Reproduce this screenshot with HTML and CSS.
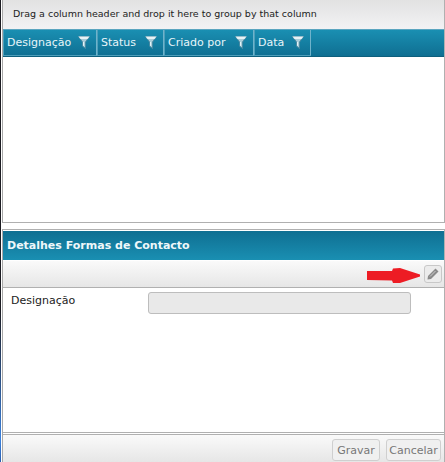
FILE: index.html
```html
<!doctype html>
<html lang="en">
<head>
    <meta charset="utf-8">
    <title>Detalhes Formas de Contacto</title>
    <link rel="stylesheet" href="styles.css">
</head>
<body>
    <svg class="defs" width="0" height="0">
        <symbol id="funnel" viewBox="0 0 12 13">
            <path d="M0.500 0.500H11.500L7.500 6V12.500L4.500 10V6Z" fill="#a9cdd9" stroke="#4a8aa2"/>
            <path d="M0.500 0.500H11.500L9.500 3H2.500Z" fill="#e6f2f6"/>
            <path d="M5 6H6V10L5 9.500Z" fill="#e6f2f6"/>
        </symbol>
    </svg>
    <div class="page">
        <div class="grid-panel">
            <div class="group-bar">Drag a column header and drop it here to group by that column</div>
            <div class="grid-head">
                <div class="col col-1">Designação <svg class="filter"><use href="#funnel"/></svg></div>
                <div class="col col-2">Status <svg class="filter"><use href="#funnel"/></svg></div>
                <div class="col col-3">Criado por <svg class="filter"><use href="#funnel"/></svg></div>
                <div class="col col-4">Data <svg class="filter"><use href="#funnel"/></svg></div>
            </div>
            <div class="grid-body"></div>
        </div>

        <div class="details-panel">
            <div class="details-title">Detalhes Formas de Contacto</div>
            <div class="toolbar">
                <svg class="arrow" viewBox="0 0 53 15"><path d="M0 3L25 3L26 0.500L33 0L53 6.500L53 8.500L33 15L26 15L25 12.500L0 12Z" fill="#ed1c24"/></svg>
                <button class="edit-btn" type="button">
                    <svg viewBox="0 0 12 12" width="12" height="12"><path d="M8.500 0.500L11.500 3.500L4 11L0.500 11.500L1 8Z" fill="#8a8a8a"/><path d="M3 8.500L8.500 3" stroke="#dcdcdc" stroke-width="0.800"/></svg>
                </button>
            </div>
            <div class="form">
                <label class="form-label">Designação</label>
                <div class="form-input"></div>
            </div>
            <div class="footer">
                <button class="btn btn-save" type="button">Gravar</button>
                <button class="btn btn-cancel" type="button">Cancelar</button>
            </div>
        </div>
    </div>
</body>
</html>
```

FILE: styles.css
```css
* {
    box-sizing: border-box;
    font-family: "DejaVu Sans", Verdana, sans-serif;
}
html, body {
    margin: 0;
    padding: 0;
    background: white;
}
.defs {
    display: block;
}
.page {
    width: 445px;
    height: 462px;
    overflow: hidden;
    padding-left: 2px;
    display: flex;
    flex-direction: column;
    background: linear-gradient(#1c1c22 0, #1c1c22 310px, #3a80dc 440px, #2a5fb0 462px) no-repeat left top / 1px 100%;
}
.grid-panel {
    height: 223px;
    border-left: 1px solid #a8a8a8;
    border-right: 1px solid #b0b0b0;
    border-bottom: 1px solid #b0b0b0;
    display: flex;
    flex-direction: column;
}
.group-bar {
    height: 29px;
    padding: 2px 0 0 10px;
    line-height: 24px;
    font-size: 9.5px;
    color: #222;
    background: linear-gradient(#e2e2e2, #f2f2f4);
}
.grid-head {
    height: 28px;
    display: flex;
    background: linear-gradient(#1a8fb2, #0f6f92);
    border-top: 1px solid #5aa5c0;
    border-bottom: 1px solid #0d5f7d;
}
.col {
    height: 26px;
    display: flex;
    align-items: center;
    justify-content: space-between;
    padding: 0 6px 0 3px;
    font-size: 11px;
    color: #e8f5f9;
    border-right: 1px solid #6fb3cb;
    border-left: 1px solid #4e9fbb;
    border-bottom: 1px solid #4e9fbb;
}
.col-1 { width: 94px; }
.col-2 { width: 67px; }
.col-3 { width: 90px; }
.col-4 { width: 57px; }
.filter {
    width: 12px;
    height: 13px;
    flex: none;
}
.grid-body {
    flex: 1;
    background: white;
}
.details-panel {
    margin-top: 6px;
    flex: 1;
    border-top: 1px solid #b0b0b0;
    border-left: 1px solid #a8a8a8;
    border-right: 1px solid #b0b0b0;
    display: flex;
    flex-direction: column;
}
.details-title {
    height: 31px;
    padding-left: 4px;
    line-height: 30px;
    font-size: 11px;
    font-weight: bold;
    color: #eef7fa;
    background: linear-gradient(#0f6f92, #1a8fb2);
    border-top: 1px solid white;
    border-bottom: 1px solid white;
}
.toolbar {
    height: 27px;
    display: flex;
    align-items: center;
    justify-content: flex-end;
    gap: 4px;
    padding-right: 2px;
    background: linear-gradient(#fafafa, #e6e6e6);
    border-bottom: 1px solid #b0b0b0;
}
.arrow {
    width: 53px;
    height: 15px;
    margin-top: 3px;
}
.edit-btn {
    width: 18px;
    height: 18px;
    padding: 0;
    display: flex;
    align-items: center;
    justify-content: center;
    background: #ececec;
    border: 1px solid #c8c8c8;
    border-radius: 3px;
}
.form {
    flex: 1;
    display: flex;
    align-items: flex-start;
    padding: 4px 33px 0 8px;
    justify-content: space-between;
    border-bottom: 1px solid #b0b0b0;
}
.form-label {
    margin-top: 1px;
    font-size: 11px;
    line-height: 16px;
    color: #222;
}
.form-input {
    width: 263px;
    height: 22px;
    background: #e9e9e9;
    border: 1px solid #bdbdbd;
    border-radius: 3px;
}
.footer {
    height: 28px;
    flex: none;
    margin-top: 1px;
    border-top: 1px solid #b0b0b0;
    display: flex;
    justify-content: flex-end;
    align-items: flex-end;
    gap: 6px;
    padding: 0 3px 1px 0;
    background: linear-gradient(#fafafa, #e6e6e6);
}
.btn {
    height: 22px;
    padding: 0;
    font-size: 11px;
    color: #777;
    background: #f0f0f0;
    border: 1px solid #cfcfcf;
    border-radius: 3px;
}
.btn-save { width: 48px; }
.btn-cancel { width: 55px; }
```
